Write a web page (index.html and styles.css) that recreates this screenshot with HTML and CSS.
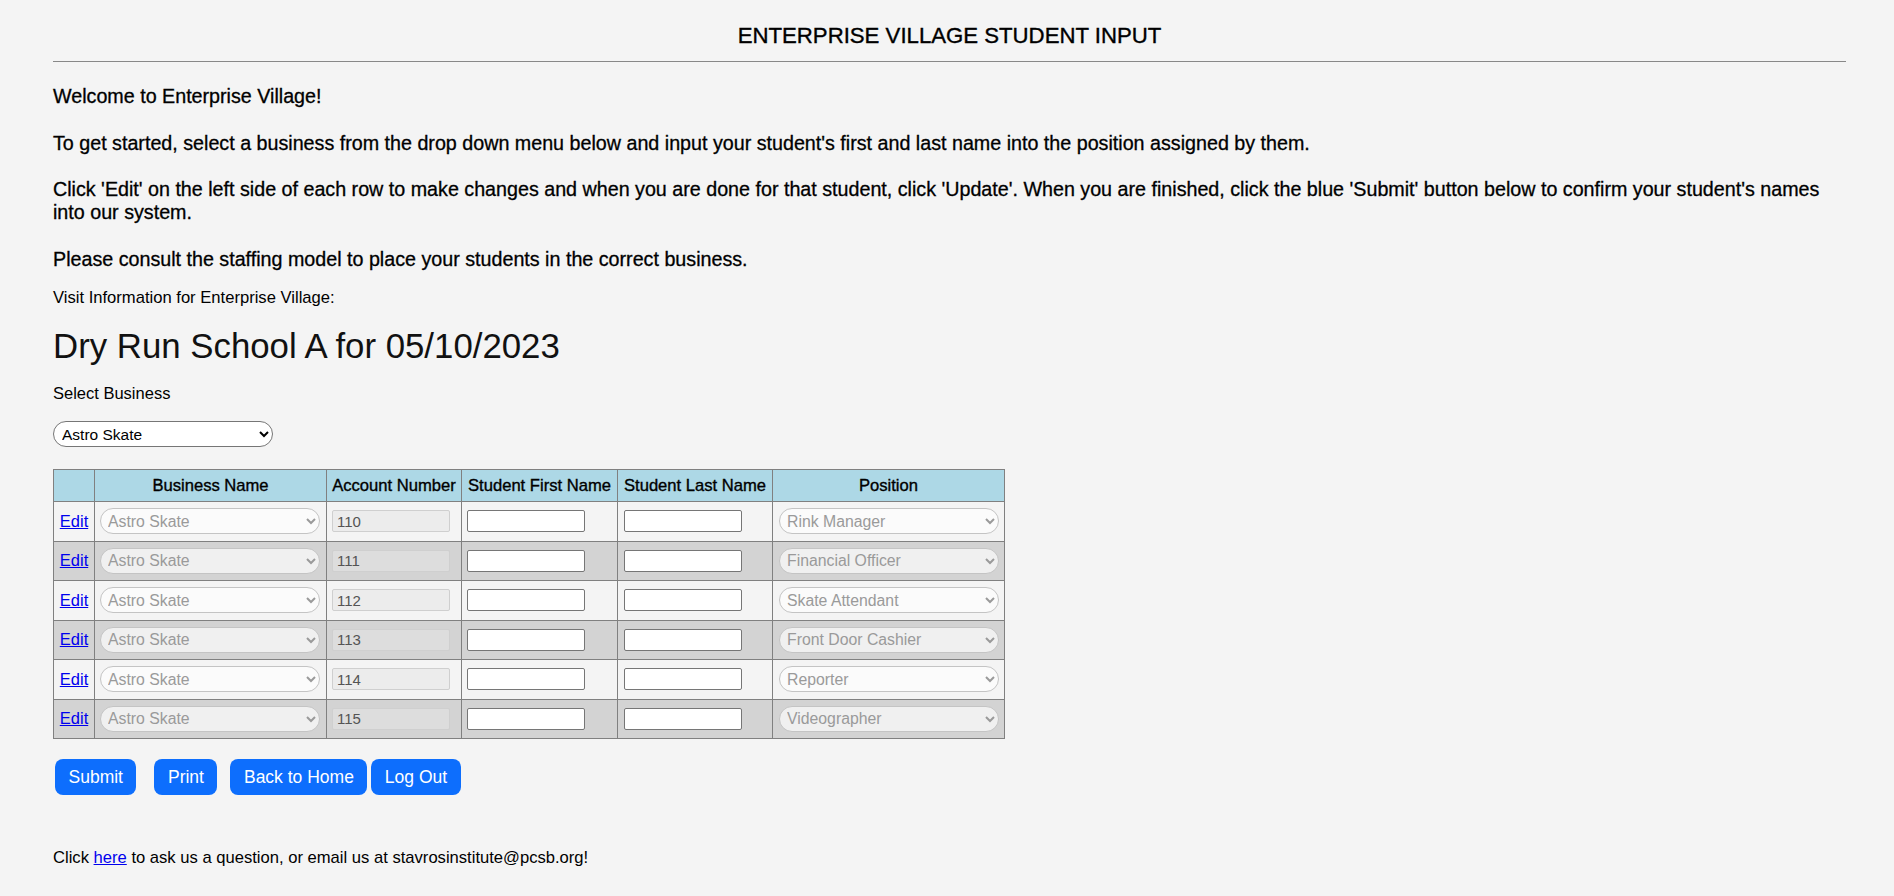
FILE: index.html
```html
<!DOCTYPE html>
<html lang="en">
<head>
<meta charset="utf-8">
<title>Enterprise Village Student Input</title>
<link rel="stylesheet" href="styles.css">
</head>
<body>
<div class="page">
  <h1 class="title">ENTERPRISE VILLAGE STUDENT INPUT</h1>
  <hr class="rule">
  <div class="intro">
    <p>Welcome to Enterprise Village!</p>
    <p>To get started, select a business from the drop down menu below and input your student's first and last name into the position assigned by them.</p>
    <p>Click 'Edit' on the left side of each row to make changes and when you are done for that student, click 'Update'. When you are finished, click the blue 'Submit' button below to confirm your student's names into our system.</p>
    <p>Please consult the staffing model to place your students in the correct business.</p>
  </div>
  <div class="visit-label">Visit Information for Enterprise Village:</div>
  <h2 class="visit-title">Dry Run School A for 05/10/2023</h2>
  <div class="select-label">Select Business</div>
  <select class="business-select">
    <option>Astro Skate</option>
  </select>

  <table class="grid">
    <colgroup>
      <col class="c-edit"><col class="c-biz"><col class="c-acct"><col class="c-first"><col class="c-last"><col class="c-pos">
    </colgroup>
    <thead>
      <tr>
        <th></th>
        <th>Business Name</th>
        <th>Account Number</th>
        <th>Student First Name</th>
        <th>Student Last Name</th>
        <th>Position</th>
      </tr>
    </thead>
    <tbody>
      <tr class="odd">
        <td class="edit-cell"><a href="#">Edit</a></td>
        <td><select class="row-select" disabled><option>Astro Skate</option></select></td>
        <td><input class="acct" type="text" value="110" disabled></td>
        <td><input class="name" type="text"></td>
        <td><input class="name" type="text"></td>
        <td><select class="row-select" disabled><option>Rink Manager</option></select></td>
      </tr>
      <tr class="even">
        <td class="edit-cell"><a href="#">Edit</a></td>
        <td><select class="row-select" disabled><option>Astro Skate</option></select></td>
        <td><input class="acct" type="text" value="111" disabled></td>
        <td><input class="name" type="text"></td>
        <td><input class="name" type="text"></td>
        <td><select class="row-select" disabled><option>Financial Officer</option></select></td>
      </tr>
      <tr class="odd">
        <td class="edit-cell"><a href="#">Edit</a></td>
        <td><select class="row-select" disabled><option>Astro Skate</option></select></td>
        <td><input class="acct" type="text" value="112" disabled></td>
        <td><input class="name" type="text"></td>
        <td><input class="name" type="text"></td>
        <td><select class="row-select" disabled><option>Skate Attendant</option></select></td>
      </tr>
      <tr class="even">
        <td class="edit-cell"><a href="#">Edit</a></td>
        <td><select class="row-select" disabled><option>Astro Skate</option></select></td>
        <td><input class="acct" type="text" value="113" disabled></td>
        <td><input class="name" type="text"></td>
        <td><input class="name" type="text"></td>
        <td><select class="row-select" disabled><option>Front Door Cashier</option></select></td>
      </tr>
      <tr class="odd">
        <td class="edit-cell"><a href="#">Edit</a></td>
        <td><select class="row-select" disabled><option>Astro Skate</option></select></td>
        <td><input class="acct" type="text" value="114" disabled></td>
        <td><input class="name" type="text"></td>
        <td><input class="name" type="text"></td>
        <td><select class="row-select" disabled><option>Reporter</option></select></td>
      </tr>
      <tr class="even">
        <td class="edit-cell"><a href="#">Edit</a></td>
        <td><select class="row-select" disabled><option>Astro Skate</option></select></td>
        <td><input class="acct" type="text" value="115" disabled></td>
        <td><input class="name" type="text"></td>
        <td><input class="name" type="text"></td>
        <td><select class="row-select" disabled><option>Videographer</option></select></td>
      </tr>
    </tbody>
  </table>

  <div class="actions">
    <button class="btn btn-submit" type="button">Submit</button>
    <button class="btn btn-print" type="button">Print</button>
    <button class="btn btn-home" type="button">Back to Home</button>
    <button class="btn btn-logout" type="button">Log Out</button>
  </div>

  <p class="footer">Click <a href="#">here</a> to ask us a question, or email us at stavrosinstitute@pcsb.org!</p>
</div>
</body>
</html>
```

FILE: styles.css
```css
html, body {
  margin: 0;
  padding: 0;
  background: #f4f4f4;
}

body {
  font-family: "Liberation Sans", Arial, sans-serif;
  color: #000;
}

.page {
  margin: 0 48px 0 53px;
  padding-top: 22px;
}

.title {
  margin: 0;
  font-size: 22.2px;
  line-height: 28px;
  font-weight: normal;
  text-align: center;
  -webkit-text-stroke: 0.35px #000;
}

.rule {
  margin: 11px 0 0 0;
  border: 0;
  border-top: 1px solid #888;
  height: 0;
}

.intro {
  margin-top: 23px;
}

.intro p {
  margin: 0 0 23.5px 0;
  font-size: 19.7px;
  line-height: 23px;
  -webkit-text-stroke: 0.3px #000;
}

.visit-label {
  margin-top: -5px;
  font-size: 16.6px;
  line-height: 18px;
}

.visit-title {
  margin: 19px 0 0 0;
  font-size: 34.8px;
  line-height: 40px;
  font-weight: normal;
  color: #111;
}

.select-label {
  margin-top: 18px;
  font-size: 16.5px;
  line-height: 18px;
}

.business-select {
  display: block;
  margin-top: 19px;
  width: 220px;
  height: 26px;
  border: 1px solid #767676;
  border-radius: 13px;
  background: #fff;
  color: #000;
  font-family: "Liberation Sans", Arial, sans-serif;
  font-size: 15.5px;
  padding: 0 4px;
}

.grid {
  margin-top: 22px;
  border-collapse: collapse;
  table-layout: fixed;
  width: 952px;
  border: 1px solid #808080;
}

.c-edit { width: 41px; }
.c-biz { width: 232px; }
.c-acct { width: 135px; }
.c-first { width: 156px; }
.c-last { width: 155px; }
.c-pos { width: 232px; }

.grid th,
.grid td {
  border: 1px solid #808080;
  padding: 0 5px;
}

.grid thead tr {
  height: 32px;
  background: #add8e6;
}

.grid th {
  font-size: 16.6px;
  font-weight: normal;
  -webkit-text-stroke: 0.35px #000;
  text-align: center;
  white-space: nowrap;
  padding: 0 2px;
}

.grid tbody tr {
  height: 39.5px;
}

.grid tr.odd { background: #f4f4f4; }
.grid tr.even { background: #d3d3d3; }

.grid td.edit-cell {
  text-align: center;
  padding: 0;
}

.edit-cell a {
  color: #0000ee;
  font-size: 16.5px;
}

.row-select {
  display: block;
  width: 220px;
  height: 26px;
  border: 1px solid #c4c4c4;
  border-radius: 13px;
  background: rgba(255, 255, 255, 0.65);
  color: #9a9a9a;
  font-family: "Liberation Sans", Arial, sans-serif;
  font-size: 15.8px;
  padding: 0 3px;
  opacity: 1;
}

.acct {
  display: block;
  box-sizing: border-box;
  width: 118px;
  height: 22px;
  border: 1px solid #cfcfcf;
  border-radius: 2px;
  background: rgba(230, 230, 230, 0.55);
  color: #545454;
  font-family: "Liberation Sans", Arial, sans-serif;
  font-size: 15px;
  padding: 0 4px;
}

.name {
  display: block;
  box-sizing: border-box;
  width: 118px;
  height: 22px;
  border: 1px solid #767676;
  border-radius: 2px;
  background: #fff;
  padding: 0 4px;
  font-family: "Liberation Sans", Arial, sans-serif;
  font-size: 15px;
}

.grid td:nth-child(5) .name,
.grid td:nth-child(6) .row-select {
  margin-left: 1px;
}

.actions {
  display: flex;
  margin-top: 20px;
}

.btn {
  height: 36px;
  padding: 0 13.5px;
  border: 0;
  border-radius: 8px;
  background: #0d6efd;
  color: #fff;
  font-family: "Liberation Sans", Arial, sans-serif;
  font-size: 17.5px;
  cursor: pointer;
}

.btn-submit { margin-left: 2px; }
.btn-print { margin-left: 18px; }
.btn-home { margin-left: 13px; }
.btn-logout { margin-left: 4px; }

.footer {
  margin: 54px 0 0 0;
  font-size: 16.6px;
  line-height: 18px;
}

.footer a {
  color: #0000ee;
}
```
